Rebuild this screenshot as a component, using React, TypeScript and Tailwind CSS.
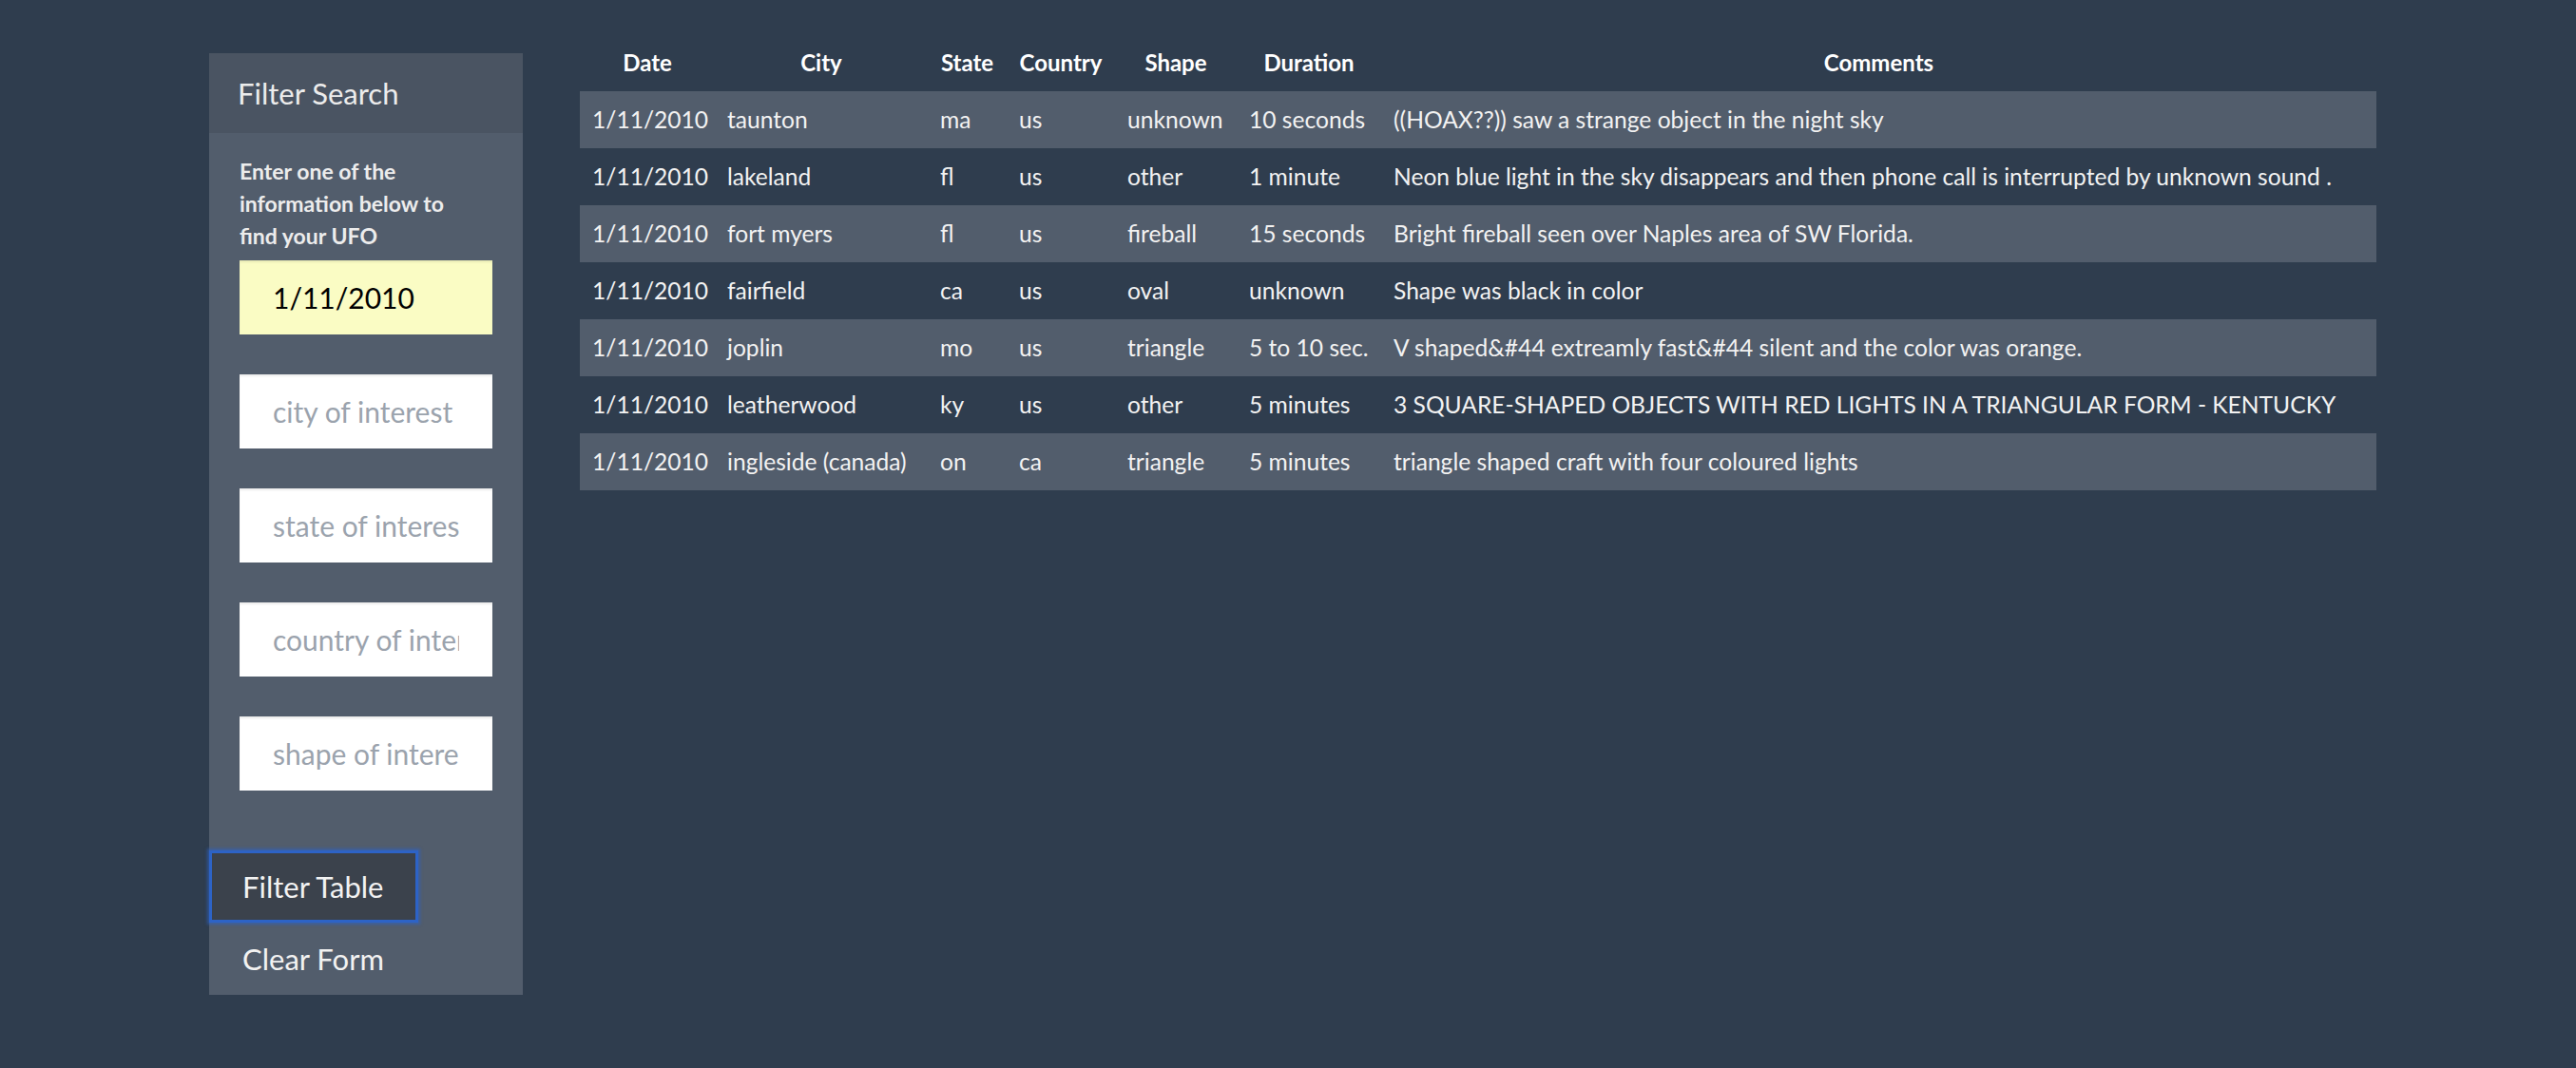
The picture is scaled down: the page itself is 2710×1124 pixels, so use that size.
const rows = [
  { date: '1/11/2010', city: 'taunton', state: 'ma', country: 'us', shape: 'unknown', duration: '10 seconds', comments: '((HOAX??)) saw a strange object in the night sky' },
  { date: '1/11/2010', city: 'lakeland', state: 'fl', country: 'us', shape: 'other', duration: '1 minute', comments: 'Neon blue light in the sky disappears and then phone call is interrupted by unknown sound .' },
  { date: '1/11/2010', city: 'fort myers', state: 'fl', country: 'us', shape: 'fireball', duration: '15 seconds', comments: 'Bright fireball seen over Naples area of SW Florida.' },
  { date: '1/11/2010', city: 'fairfield', state: 'ca', country: 'us', shape: 'oval', duration: 'unknown', comments: 'Shape was black in color' },
  { date: '1/11/2010', city: 'joplin', state: 'mo', country: 'us', shape: 'triangle', duration: '5 to 10 sec.', comments: 'V shaped&#44 extreamly fast&#44 silent and the color was orange.' },
  { date: '1/11/2010', city: 'leatherwood', state: 'ky', country: 'us', shape: 'other', duration: '5 minutes', comments: '3 SQUARE-SHAPED OBJECTS WITH RED LIGHTS IN A TRIANGULAR FORM - KENTUCKY' },
  { date: '1/11/2010', city: 'ingleside (canada)', state: 'on', country: 'ca', shape: 'triangle', duration: '5 minutes', comments: 'triangle shaped craft with four coloured lights' },
];

const placeholders = ['city of interest', 'state of interest', 'country of interest', 'shape of interest'];

export default function App() {
  return (
    <div className="h-[1124px] w-full overflow-hidden bg-[#2f3d4e] font-['Lato','Open_Sans',sans-serif] text-[#f2f2f2]">
      <div className="flex items-start pl-[220px] pr-[210px] pt-[36px]">
        {/* Sidebar */}
        <aside className="mt-[20px] w-[330px] shrink-0 bg-[#525d6c]">
          <div className="flex h-[84px] items-center bg-[#4a5462] pl-[30px] text-[31px] text-[#ececec]">
            Filter Search
          </div>
          <div className="px-[32px] pt-[23px]">
            <p className="w-[240px] text-[23px] font-bold leading-[34px] text-[#ececec]">
              Enter one of the information below to find your UFO
            </p>
            <form className="mt-[9px] flex flex-col gap-[42px]" onSubmit={(e) => e.preventDefault()}>
              <input
                defaultValue="1/11/2010"
                className="h-[78px] w-full bg-[#fafcc4] px-[35px] text-[30px] text-black shadow-[inset_0_2px_2px_rgba(0,0,0,0.08)] outline-none"
              />
              {placeholders.map((p) => (
                <input
                  key={p}
                  placeholder={p}
                  className="h-[78px] w-full bg-white px-[35px] text-[30px] text-black shadow-[inset_0_2px_2px_rgba(0,0,0,0.08)] outline-none placeholder:text-[#9ba3ad]"
                />
              ))}
            </form>
          </div>
          <div className="mt-[63px] flex flex-col">
            <button className="h-[76px] w-[220px] border-[3px] border-[#2d63c6] bg-[#3b424c] pl-[32px] text-left text-[31px] text-[#f2f2f2] shadow-[0_0_3px_2px_rgba(45,99,198,0.6)]">
              Filter Table
            </button>
            <button className="h-[76px] w-[220px] pl-[35px] text-left text-[31px] text-[#f2f2f2]">
              Clear Form
            </button>
          </div>
        </aside>

        {/* Results */}
        <main className="ml-[60px] flex-1">
          <table className="w-full table-fixed border-collapse text-[24.6px]">
            <colgroup>
              <col className="w-[142px]" />
              <col className="w-[224px]" />
              <col className="w-[83px]" />
              <col className="w-[114px]" />
              <col className="w-[128px]" />
              <col className="w-[152px]" />
              <col />
            </colgroup>
            <thead>
              <tr className="h-[60px] text-[24px]">
                {['Date', 'City', 'State', 'Country', 'Shape', 'Duration', 'Comments'].map((h) => (
                  <th key={h} className="px-[13px] text-center font-bold text-white">
                    {h}
                  </th>
                ))}
              </tr>
            </thead>
            <tbody>
              {rows.map((r, i) => (
                <tr key={r.city} className={`h-[60px] ${i % 2 === 0 ? 'bg-[#525d6c]' : ''}`}>
                  <td className="whitespace-nowrap px-[13px]">{r.date}</td>
                  <td className="whitespace-nowrap px-[13px]">{r.city}</td>
                  <td className="px-[13px]">{r.state}</td>
                  <td className="px-[13px]">{r.country}</td>
                  <td className="px-[13px]">{r.shape}</td>
                  <td className="whitespace-nowrap px-[13px]">{r.duration}</td>
                  <td className="whitespace-nowrap px-[13px]">{r.comments}</td>
                </tr>
              ))}
            </tbody>
          </table>
        </main>
      </div>
    </div>
  );
}
